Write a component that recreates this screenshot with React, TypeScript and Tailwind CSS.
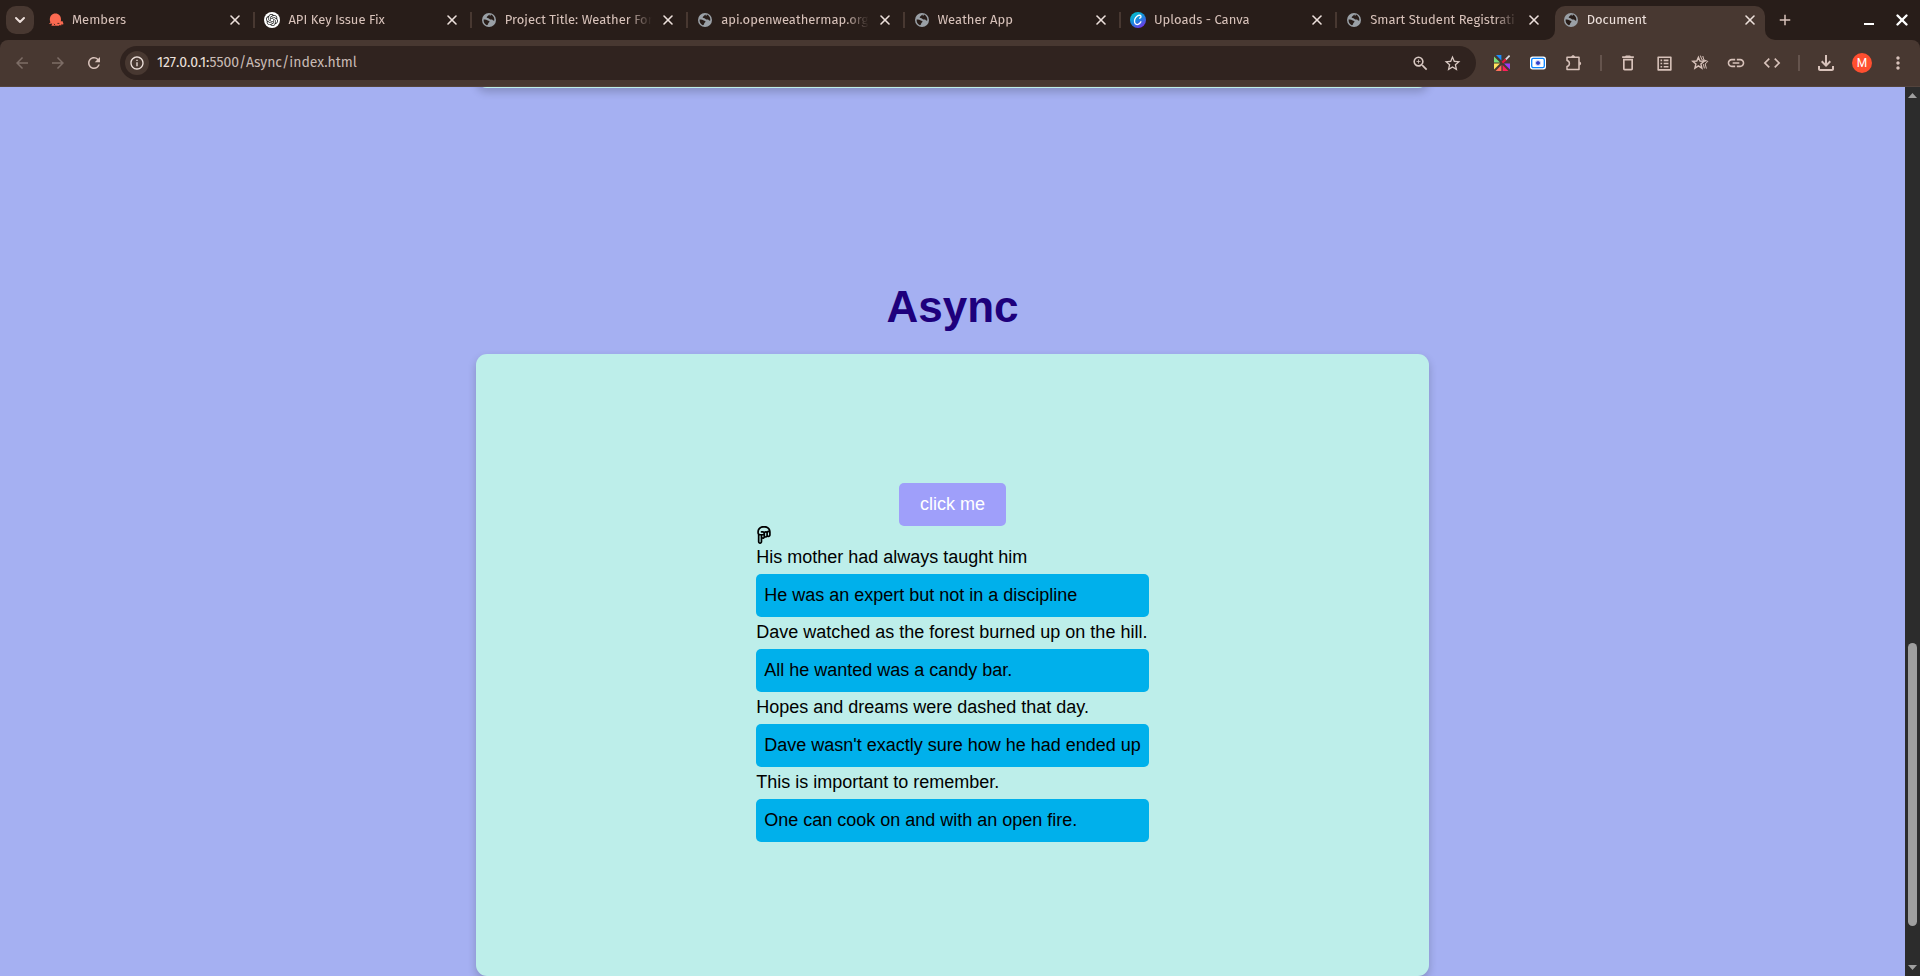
import type { ReactNode } from "react";
import {
  MdAdd,
  MdArrowBack,
  MdArrowForward,
  MdCode,
  MdDeleteOutline,
  MdInfoOutline,
  MdLink,
  MdListAlt,
  MdMoreVert,
  MdOutlineFileDownload,
  MdRefresh,
  MdStarOutline,
  MdZoomIn,
} from "react-icons/md";
import { FaRegHandPointDown } from "react-icons/fa6";
import { SiOpenai } from "react-icons/si";
import { ChevronDown, X } from "lucide-react";

function GlobeIcon() {
  return (
    <svg viewBox="0 0 16 16" className="size-4" aria-hidden="true">
      <circle cx="8" cy="8" r="7" fill="#9aa0a6" />
      <path
        d="M2.6 7.6 C4 7.2 5.6 7.5 6.4 8.3 C7.3 9.1 8.2 8.7 8.5 9.6 C8.7 10.5 7.2 10.6 7.2 11.6 C7.1 12.6 6.3 13.4 5.8 13.3 C3.6 12.3 2.3 10.2 2.6 7.6 Z"
        fill="#281d19"
      />
      <path
        d="M8.6 2.6 C7.4 3 7.2 4.2 6.2 4.6 C5.4 5 5.6 6.1 6.6 6.1 C7.8 6 8 6.9 8.8 7.3 C9.8 7.8 10.2 7.1 11 7.6 C11.6 8.1 12.4 8.9 13.3 8.6 C13.7 6 12 3.1 9.8 2.6 L9.6 3.8 L8.6 3.6 Z"
        fill="#281d19"
      />
    </svg>
  );
}

function MembersIcon() {
  return (
    <svg viewBox="0 0 16 16" className="size-4" aria-hidden="true">
      <path
        d="M1.8 8 C1.8 4 4 1.6 7.4 1.6 C10.8 1.6 13 4 13 7.4 L12.8 9.4 L14.4 9 L15.4 11.6 L15 13 L13.8 11.8 L13.2 13.6 L11.6 13 L11 13.8 L3.4 13.8 L4.2 11.6 L0.8 12 L2.4 10.4 Z"
        fill="#fb6a51"
      />
      <path d="M9.4 11.4 h2 M6 11.8 l1 1.4" stroke="#281d19" strokeWidth="0.8" />
    </svg>
  );
}

function ChatIcon() {
  return (
    <span className="flex size-4 items-center justify-center rounded-full bg-white">
      <SiOpenai className="size-3 text-[#222222]" />
    </span>
  );
}

function CanvaIcon() {
  return (
    <svg viewBox="0 0 16 16" className="size-4" aria-hidden="true">
      <defs>
        <linearGradient id="canva" x1="0.2" y1="0" x2="0.8" y2="1">
          <stop offset="0" stopColor="#00c4cc" />
          <stop offset="0.5" stopColor="#1b86dd" />
          <stop offset="1" stopColor="#7d2ae8" />
        </linearGradient>
      </defs>
      <circle cx="8" cy="8" r="8" fill="url(#canva)" />
      <path
        d="M9.6 6.2 C10.6 6.2 11.2 5 10.9 4.1 C10.4 2.9 8.5 3 7 4.3 C5.2 5.9 4.2 8.6 4.7 10.7 C5.2 12.7 7.4 13 9 11.9 C9.9 11.4 10.5 10.6 10.9 9.8"
        fill="none"
        stroke="#ffffff"
        strokeWidth="1.3"
        strokeLinecap="round"
      />
    </svg>
  );
}

function PaletteIcon() {
  return (
    <svg viewBox="0 0 16 16" className="size-4" aria-hidden="true">
      <path d="M2 0 H7.4 V5.6 Z" fill="#1a8cff" />
      <path d="M0 1.6 L6 7.4 H0 Z" fill="#7be07b" />
      <path d="M0 8.6 H6 L0 14.4 Z" fill="#ffe45c" />
      <path d="M1.6 16 L7.4 10 V16 Z" fill="#ff6f59" />
      <path d="M8.6 10 L14.4 16 H8.6 Z" fill="#ff1f5a" />
      <path d="M10 8.6 H16 V14.4 Z" fill="#9b3df5" />
      <path d="M15.6 0.6 L11.6 4.6" stroke="#d8d8e0" strokeWidth="1.8" />
      <path d="M11.8 4.4 L8.4 7.6" stroke="#e3173e" strokeWidth="2.2" />
    </svg>
  );
}

function CameraIcon() {
  return (
    <svg viewBox="0 0 16 16" className="size-4" aria-hidden="true">
      <rect x="0" y="1.6" width="16" height="12.8" rx="2.6" fill="#ffffff" />
      <rect x="1.7" y="3.3" width="12.6" height="9.4" rx="1.6" fill="#ffffff" stroke="#0a84ff" strokeWidth="1.3" />
      <circle cx="8" cy="8" r="2.1" fill="#3340c8" />
      <circle cx="8" cy="8" r="2.6" fill="none" stroke="#a9b4f0" strokeWidth="0.6" />
    </svg>
  );
}

function PuzzleIcon() {
  return (
    <svg viewBox="0 0 18 18" className="size-[18px]" fill="none" stroke="currentColor" strokeWidth="1.5" aria-hidden="true">
      <path d="M2 3.2 H14 V15.6 H2 V12.4 C5.2 11.6 5.2 7.2 2 6.4 Z" strokeLinejoin="round" />
      <path d="M6.2 3 C6.4 0.6 9.8 0.6 10 3 Z M14.2 7.4 C16.8 7.6 16.8 11.2 14.2 11.4 Z" fill="currentColor" stroke="none" />
    </svg>
  );
}

function StarsIcon() {
  return (
    <svg viewBox="0 0 18 18" className="size-[18px]" fill="none" stroke="currentColor" strokeWidth="1.4" aria-hidden="true">
      <path d="M7.4 3.2 L9 7 L13 7.3 L9.9 9.9 L10.9 14.2 L7.4 11.9 L3.9 14.2 L4.9 9.9 L1.8 7.3 L5.8 7 Z" />
      <path d="M9.4 1.6 L10.8 5.6 L14.6 7.4 M12.4 10.2 L13.4 14.4 M11.8 2 L12.8 5.8 L16.8 7.4 L14.2 10 L15.4 14.6" strokeWidth="1" />
    </svg>
  );
}

type Tab = { title: string; icon: ReactNode; active?: boolean };

const tabs: Tab[] = [
  { title: "Members", icon: <MembersIcon /> },
  { title: "API Key Issue Fix", icon: <ChatIcon /> },
  { title: "Project Title: Weather For", icon: <GlobeIcon /> },
  { title: "api.openweathermap.org", icon: <GlobeIcon /> },
  { title: "Weather App", icon: <GlobeIcon /> },
  { title: "Uploads - Canva", icon: <CanvaIcon /> },
  { title: "Smart Student Registrati", icon: <GlobeIcon /> },
  { title: "Document", icon: <GlobeIcon />, active: true },
];

function BrowserTab({ tab, first }: { tab: Tab; first: boolean }) {
  return (
    <div className="relative flex min-w-0 flex-1 items-center">
      {tab.active ? (
        <div className="absolute inset-x-[3px] top-1.5 bottom-0 rounded-t-[10px] bg-[#483831]">
          <span className="absolute bottom-0 -left-2.5 size-2.5 bg-[#483831]">
            <span className="block size-full rounded-br-[10px] bg-[#281d19]" />
          </span>
          <span className="absolute -right-2.5 bottom-0 size-2.5 bg-[#483831]">
            <span className="block size-full rounded-bl-[10px] bg-[#281d19]" />
          </span>
        </div>
      ) : null}
      <div className={`h-4 w-0.5 shrink-0 ${first || tab.active ? "" : "bg-[#483831]"}`} />
      <button
        type="button"
        className={`relative ml-[9px] flex h-8 min-w-0 flex-1 items-center gap-2 text-left text-[13px] ${
          tab.active ? "text-[#ede0db]" : "text-[#d8c2ba]"
        }`}
      >
        <span className="shrink-0">{tab.icon}</span>
        <span className="flex-1 overflow-hidden whitespace-nowrap [mask-image:linear-gradient(to_right,black_calc(100%-24px),transparent)]">
          {tab.title}
        </span>
      </button>
      <button
        type="button"
        aria-label={`Close ${tab.title}`}
        className="relative mr-2.5 ml-2 flex size-4 items-center justify-center text-[#ede0db]"
      >
        <X className="size-4" strokeWidth={2.4} />
      </button>
    </div>
  );
}

function ToolButton({ label, dim, children }: { label: string; dim?: boolean; children: ReactNode }) {
  return (
    <button
      type="button"
      aria-label={label}
      className={`flex h-9 w-9 shrink-0 items-center justify-center ${dim ? "text-[#7d6d66]" : "text-[#d8c2ba]"}`}
    >
      {children}
    </button>
  );
}

function ToolDivider() {
  return (
    <div className="flex w-[18px] shrink-0 justify-center">
      <div className="h-4 w-0.5 bg-[#65544d]" />
    </div>
  );
}

const lines: { text: string; boxed: boolean }[] = [
  { text: "His mother had always taught him", boxed: false },
  { text: "He was an expert but not in a discipline", boxed: true },
  { text: "Dave watched as the forest burned up on the hill.", boxed: false },
  { text: "All he wanted was a candy bar.", boxed: true },
  { text: "Hopes and dreams were dashed that day.", boxed: false },
  { text: "Dave wasn't exactly sure how he had ended up", boxed: true },
  { text: "This is important to remember.", boxed: false },
  { text: "One can cook on and with an open fire.", boxed: true },
];

export default function App() {
  return (
    <div className="flex h-screen flex-col overflow-hidden bg-[#281d19]">
      <header className="shrink-0 font-['Fira_Sans','Noto_Sans',sans-serif]">
        <div className="flex h-10">
          <div className="flex w-[37px] shrink-0 items-center pl-1.5">
            <button
              type="button"
              aria-label="Search tabs"
              className="flex size-7 items-center justify-center rounded-[10px] bg-[#483831] text-[#ede0db]"
            >
              <ChevronDown className="size-4" strokeWidth={3} />
            </button>
          </div>
          <nav aria-label="Tabs" className="flex min-w-0 flex-1">
            {tabs.map((tab, i) => (
              <BrowserTab key={tab.title} tab={tab} first={i === 0} />
            ))}
          </nav>
          <div className="flex w-[152px] shrink-0 items-center pl-[7px]">
            <button type="button" aria-label="New tab" className="flex size-5 items-center justify-center text-[#d8c2ba]">
              <MdAdd className="size-[18px]" />
            </button>
            <button type="button" aria-label="Minimize" className="ml-auto flex size-5 items-center justify-center pt-2">
              <span className="h-0.5 w-2.5 bg-white" />
            </button>
            <button type="button" aria-label="Close window" className="mr-2 ml-[13px] flex size-5 items-center justify-center text-white">
              <X className="size-[18px]" strokeWidth={3.2} />
            </button>
          </div>
        </div>
        <div className="flex h-[47px] items-center rounded-t-lg border-b border-[#54443d] bg-[#483831] px-1">
          <ToolButton label="Back" dim>
            <MdArrowBack className="size-[18px]" />
          </ToolButton>
          <ToolButton label="Forward" dim>
            <MdArrowForward className="size-[18px]" />
          </ToolButton>
          <ToolButton label="Reload">
            <MdRefresh className="size-[18px]" />
          </ToolButton>
          <div className="mx-2 flex h-[34px] min-w-0 flex-1 items-center rounded-full bg-[#30231f] pr-2 pl-[5px]">
            <button
              type="button"
              aria-label="Site information"
              className="flex size-6 shrink-0 items-center justify-center rounded-full bg-[#483831] text-[#ede0db]"
            >
              <MdInfoOutline className="size-4" />
            </button>
            <a href="http://127.0.0.1:5500/Async/index.html" className="ml-2 flex-1 truncate text-sm leading-6 text-[#c9bbb5]">
              <span className="text-[#ede0db]">127.0.0.1:</span>5500/Async/index.html
            </a>
            <button type="button" aria-label="Zoom" className="flex size-8 items-center justify-center text-[#d8c8c2]">
              <MdZoomIn className="size-[19px]" />
            </button>
            <button type="button" aria-label="Bookmark this page" className="flex size-8 items-center justify-center text-[#d8c8c2]">
              <MdStarOutline className="size-[19px]" />
            </button>
          </div>
          <ToolButton label="Color picker">
            <PaletteIcon />
          </ToolButton>
          <ToolButton label="Screen capture">
            <CameraIcon />
          </ToolButton>
          <ToolButton label="Extensions">
            <PuzzleIcon />
          </ToolButton>
          <ToolDivider />
          <ToolButton label="Delete browsing data">
            <MdDeleteOutline className="size-5" />
          </ToolButton>
          <ToolButton label="Reading list">
            <MdListAlt className="size-[19px]" />
          </ToolButton>
          <ToolButton label="Bookmarks">
            <StarsIcon />
          </ToolButton>
          <ToolButton label="Copy link">
            <MdLink className="size-5" />
          </ToolButton>
          <ToolButton label="Developer tools">
            <MdCode className="size-5" />
          </ToolButton>
          <ToolDivider />
          <ToolButton label="Downloads">
            <MdOutlineFileDownload className="size-6" />
          </ToolButton>
          <ToolButton label="Profile">
            <span className="flex size-5 items-center justify-center rounded-full bg-[#ff4f30] font-[Roboto,sans-serif] text-xs text-white">
              M
            </span>
          </ToolButton>
          <ToolButton label="Menu">
            <MdMoreVert className="size-5" />
          </ToolButton>
        </div>
      </header>

      <div className="flex min-h-0 flex-1">
        <main className="flex min-w-0 flex-1 flex-col items-center overflow-hidden bg-[#a5b0f2] font-['Liberation_Sans',Arial,sans-serif] text-lg text-black">
          <div className="-mt-[11px] h-3 w-1/2 shrink-0 rounded-b-[11px] bg-[#bdeeea] shadow-[0_4px_9px_rgba(0,0,0,0.2)]" />
          <h1 className="mt-[194px] shrink-0 text-[44px] leading-[50px] font-bold text-[#1e007c]">Async</h1>
          <section className="mt-[22px] flex h-[622px] w-1/2 shrink-0 flex-col items-center justify-center rounded-[11px] bg-[#bdeeea] pb-1.5 shadow-[0_4px_9px_rgba(0,0,0,0.2)]">
            <button type="button" className="h-[43px] rounded-[5px] bg-[#9f9ffa] px-[21px] text-white">
              click me
            </button>
            <div>
              <div className="h-4">
                <FaRegHandPointDown className="h-[18px] w-4" />
              </div>
              {lines.map((line) =>
                line.boxed ? (
                  <p key={line.text} className="rounded-[5px] bg-[#00b0eb] px-2 leading-[43px]">
                    {line.text}
                  </p>
                ) : (
                  <p key={line.text} className="pb-0.5 leading-[30px]">
                    {line.text}
                  </p>
                ),
              )}
            </div>
          </section>
        </main>
        <div className="flex w-[15px] shrink-0 flex-col items-center bg-[#2c2c2c] py-1.5" aria-hidden="true">
          <svg viewBox="0 0 9 5" className="h-[5px] w-[9px] shrink-0">
            <path d="M0 5 L4.5 0 L9 5 Z" fill="#9f9f9f" />
          </svg>
          <div className="grow-[544]" />
          <div className="w-[9px] grow-[283] rounded-full bg-[#9f9f9f]" />
          <div className="grow-[39]" />
          <svg viewBox="0 0 9 5" className="h-[5px] w-[9px] shrink-0">
            <path d="M0 0 L4.5 5 L9 0 Z" fill="#9f9f9f" />
          </svg>
        </div>
      </div>
    </div>
  );
}
